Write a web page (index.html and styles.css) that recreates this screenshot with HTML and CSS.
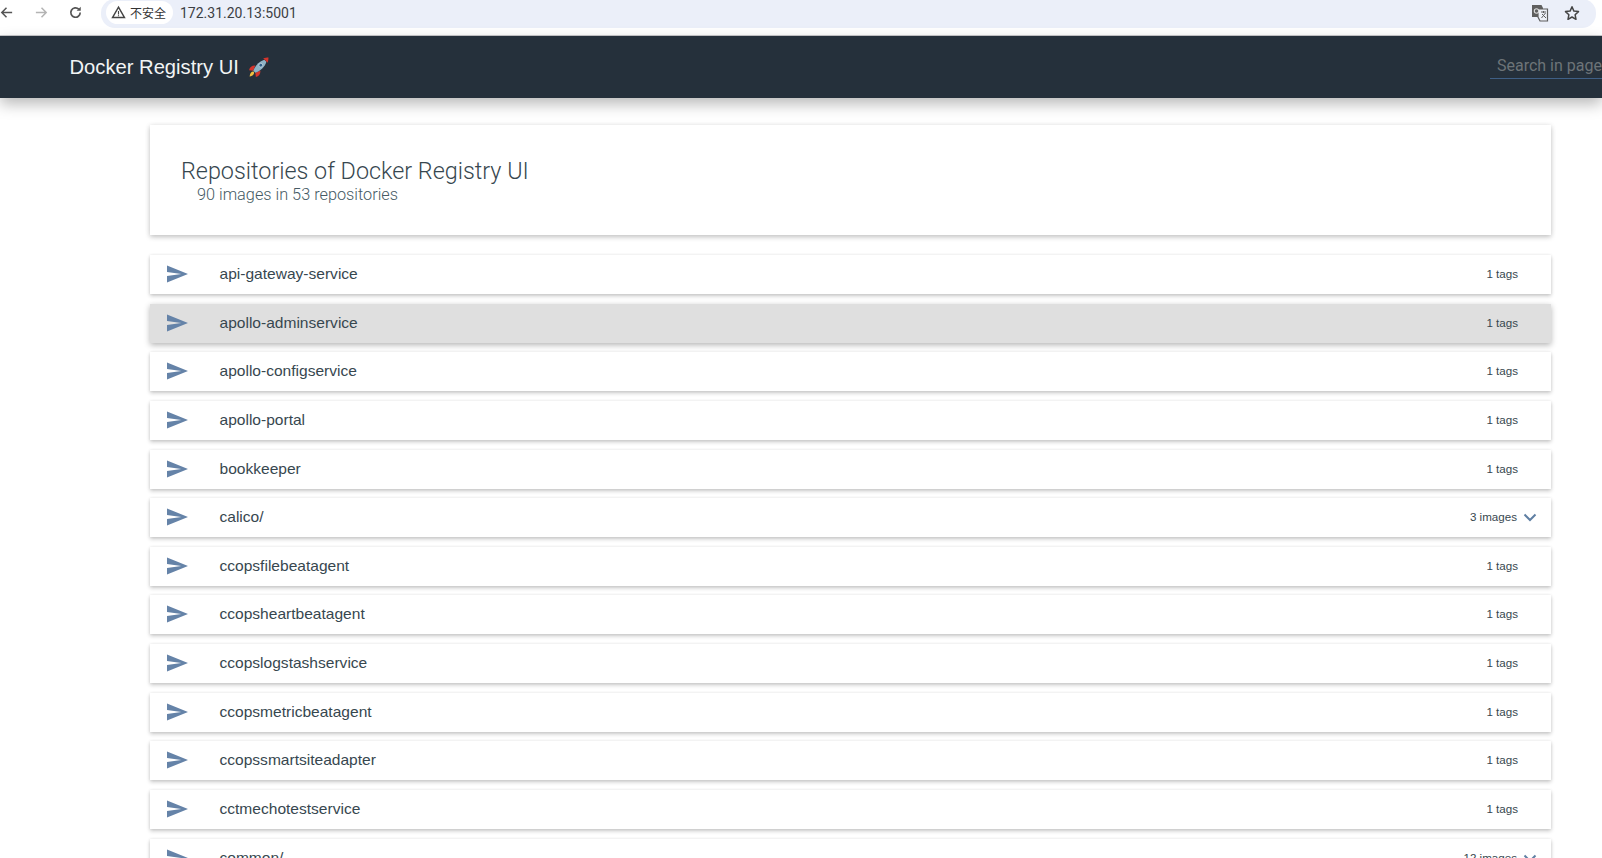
FILE: index.html
```html
<!DOCTYPE html>
<html lang="zh">
<head>
<meta charset="utf-8">
<title>Docker Registry UI</title>
<link rel="stylesheet" href="styles.css">
</head>
<body>
<svg class="sprites" width="0" height="0" aria-hidden="true">
  <symbol id="send" viewBox="0 0 22 18"><path d="M0 0 L22 9 L0 18 V11 L15 9 L0 7 Z"/></symbol>
  <symbol id="chev" viewBox="0 0 14 9"><path d="M1.5 1.5 L7 7 L12.5 1.5" fill="none" stroke="currentColor" stroke-width="2"/></symbol>
</svg>
<div class="browser">
  <div class="nav">
    <svg class="navicon" viewBox="0 0 16 16"><path d="M14 8H3M8 3L3 8l5 5" fill="none" stroke="#555" stroke-width="1.6"/></svg>
    <svg class="navicon" viewBox="0 0 16 16"><path d="M2 8h11M8 3l5 5-5 5" fill="none" stroke="#b4b4b4" stroke-width="1.6"/></svg>
    <svg class="navicon" viewBox="0 0 16 16"><path d="M13 8a5 5 0 1 1-1.5-3.5" fill="none" stroke="#555" stroke-width="1.8"/><path d="M13.6 1.8V6.2H9.2Z" fill="#555"/></svg>
  </div>
  <div class="omni">
    <div class="chip">
      <svg class="warn" viewBox="0 0 16 16"><path d="M8 2.2L14.4 13.4H1.6Z" fill="none" stroke="#444" stroke-width="1.5"/><path d="M8 6.4V10M8 10.9V12" stroke="#444" stroke-width="1.2"/></svg>
      <span>不安全</span>
    </div>
    <span class="url">172.31.20.13:5001</span>
    <div class="omni-end">
      <svg class="tr" viewBox="0 0 18 18"><path d="M1 1H10.5L12 4V13H1Z" fill="#5f5f5f"/><path d="M7 5H16.5V17H9L7 13Z" fill="#eef1f8" stroke="#5f5f5f" stroke-width="1.2"/><circle cx="5.5" cy="7" r="2.2" fill="none" stroke="#ddd" stroke-width="1.1"/><path d="M10 8H15M12.5 7V9M10.5 14L14.5 9M11 10L15 14" stroke="#5f5f5f" stroke-width="1"/></svg>
      <svg class="star" viewBox="0 0 16 16"><path d="M8 1.8L9.9 6.1L14.5 6.6L11.1 9.7L12 14.3L8 12L4 14.3L4.9 9.7L1.5 6.6L6.1 6.1Z" fill="none" stroke="#444" stroke-width="1.5" stroke-linejoin="round"/></svg>
    </div>
  </div>
</div>
<header class="bar">
  <div class="brand">
    <span>Docker Registry UI</span>
    <svg class="rocket" viewBox="0 0 20 20">
      <path d="M1.5 18.5C2 15.5 3.5 13.5 5.5 14C6.5 15.5 5 18 1.5 18.5Z" fill="#f0c040"/>
      <path d="M1 12.5C1.8 9.5 4 8 7 8.2L5 13ZM7.5 19C10.5 18.2 12 16 11.8 13L7 15Z" fill="#d5342c"/>
      <path d="M5 13C7 8 10.5 4 15.5 2.5L17.5 4.5C16 9.5 12 13 7 15Z" fill="#8fb3c6"/>
      <path d="M14.5 1.3C16 .8 18 .5 19.5 .5C19.5 2 19.2 4 18.7 5.5Z" fill="#d5342c"/>
      <circle cx="12.2" cy="7.8" r="1.8" fill="#2f5f88" stroke="#dfe8ee" stroke-width=".6"/>
    </svg>
  </div>
  <div class="search">Search in page</div>
</header>
<main class="page">
  <section class="intro">
    <h1>Repositories of Docker Registry UI</h1>
    <p>90 images in 53 repositories</p>
  </section>
  <ul class="repos">
    <li class="repo"><svg class="send"><use href="#send"/></svg><span class="name">api-gateway-service</span><span class="count">1 tags</span></li>
    <li class="repo hover"><svg class="send"><use href="#send"/></svg><span class="name">apollo-adminservice</span><span class="count">1 tags</span></li>
    <li class="repo"><svg class="send"><use href="#send"/></svg><span class="name">apollo-configservice</span><span class="count">1 tags</span></li>
    <li class="repo"><svg class="send"><use href="#send"/></svg><span class="name">apollo-portal</span><span class="count">1 tags</span></li>
    <li class="repo"><svg class="send"><use href="#send"/></svg><span class="name">bookkeeper</span><span class="count">1 tags</span></li>
    <li class="repo"><svg class="send"><use href="#send"/></svg><span class="name">calico/</span><span class="count">3 images</span><svg class="chev"><use href="#chev"/></svg></li>
    <li class="repo"><svg class="send"><use href="#send"/></svg><span class="name">ccopsfilebeatagent</span><span class="count">1 tags</span></li>
    <li class="repo"><svg class="send"><use href="#send"/></svg><span class="name">ccopsheartbeatagent</span><span class="count">1 tags</span></li>
    <li class="repo"><svg class="send"><use href="#send"/></svg><span class="name">ccopslogstashservice</span><span class="count">1 tags</span></li>
    <li class="repo"><svg class="send"><use href="#send"/></svg><span class="name">ccopsmetricbeatagent</span><span class="count">1 tags</span></li>
    <li class="repo"><svg class="send"><use href="#send"/></svg><span class="name">ccopssmartsiteadapter</span><span class="count">1 tags</span></li>
    <li class="repo"><svg class="send"><use href="#send"/></svg><span class="name">cctmechotestservice</span><span class="count">1 tags</span></li>
    <li class="repo"><svg class="send"><use href="#send"/></svg><span class="name">common/</span><span class="count">12 images</span><svg class="chev"><use href="#chev"/></svg></li>
  </ul>
</main>
</body>
</html>
```
FILE: styles.css
```css
* { box-sizing: border-box; }
html, body { margin: 0; height: 858px; overflow: hidden; background: #fff; }
body { font-family: Roboto, "Liberation Sans", sans-serif; color: #37474f; }
.sprites { position: absolute; }

.browser { height: 36px; display: flex; background: #fff; border-bottom: 1px solid #c9c9cc; }
.nav { width: 102px; display: flex; align-items: center; height: 25px; margin-left: -1px; flex: none; }
.navicon { width: 15px; height: 15px; flex: none; margin-right: 19.5px; }
.omni { flex: 1; margin-right: 6px; height: 29px; background: #ebeff9; border-radius: 14px; margin-top: -1px; display: flex; align-items: center; padding: 0 16px 2px 5px; }
.chip { height: 23px; width: 67px; border-radius: 11.5px; background: #fff; display: flex; align-items: center; padding-left: 5px; gap: 4px; font: 12px "Noto Sans CJK SC", sans-serif; color: #333; flex: none; }
.warn { width: 15px; height: 15px; }
.url { margin-left: 7px; font: 14px Roboto, sans-serif; color: #3c4043; }
.omni-end { margin-left: auto; display: flex; align-items: center; gap: 15px; }
.tr { width: 18px; height: 18px; }
.star { width: 16px; height: 16px; }

.bar { height: 62px; background: #25303b; color: #fff; display: flex; align-items: center; justify-content: space-between; padding-left: 69.5px; box-shadow: 0 6px 14px rgba(0,0,0,.28); position: relative; }
.brand { display: flex; align-items: center; gap: 9px; font: 20.2px "Liberation Sans", sans-serif; color: #f2f4f5; }
.rocket { width: 21px; height: 21px; }
.search { width: 112px; height: 24px; padding-left: 7px; border-bottom: 1px solid #3f5f85; color: #6d7478; font-size: 16px; line-height: 22px; white-space: nowrap; overflow: hidden; }

.page { padding: 27px 51px 0 150px; }
.intro { height: 110px; background: #fff; padding: 33px 31px 0; box-shadow: 0 2px 5px rgba(0,0,0,.22), 0 0 6px rgba(0,0,0,.06); }
.intro h1 { margin: 0; font-size: 23.35px; font-weight: 300; line-height: 26px; color: #37474f; }
.intro p { margin: 0; padding-left: 16px; font-size: 16.3px; font-weight: 300; line-height: 22px; color: #455a64; }

.repos { list-style: none; margin: 20px 0 0; padding: 0; display: flex; flex-direction: column; gap: 9.65px; }
.repo { height: 39px; flex: none; background: #fff; display: flex; align-items: center; padding: 0 15px 0 17px; box-shadow: 0 2px 4px rgba(0,0,0,.22), 0 0 3px rgba(0,0,0,.07); }
.repo.hover { background: #dfdfdf; box-shadow: 0 2px 6px rgba(0,0,0,.3); }
.send { width: 21px; height: 18px; fill: #6583a8; flex: none; margin-top: -1px; }
.name { margin-left: 31.5px; flex: 1; font: 15.55px/20px "Liberation Sans", sans-serif; color: #37474f; margin-top: -1px; }
.count { font: 11.6px/14px "Liberation Sans", sans-serif; color: #37474f; margin-right: 18px; margin-top: -1px; }
.count:has(+ .chev) { margin-right: 6px; }
.chev { width: 14px; height: 9px; color: #5f7fa3; flex: none; margin-right: -1px; }
```
